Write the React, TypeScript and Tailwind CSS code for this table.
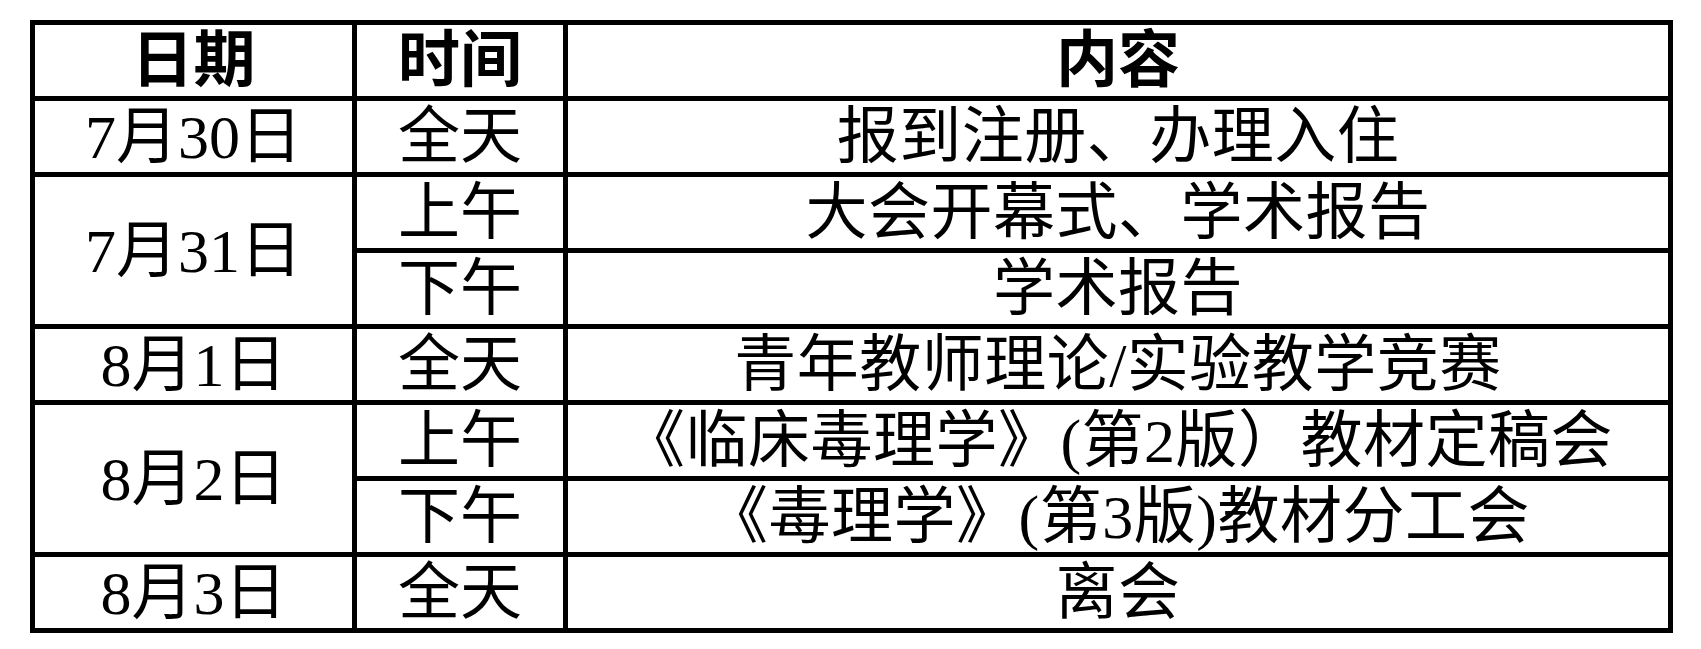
import { Fragment } from 'react';

const rows: { date?: string; span?: number; time: string; content: string }[] = [
  { date: '7月30日', time: '全天', content: '报到注册、办理入住' },
  { date: '7月31日', span: 2, time: '上午', content: '大会开幕式、学术报告' },
  { time: '下午', content: '学术报告' },
  { date: '8月1日', time: '全天', content: '青年教师理论/实验教学竞赛' },
  { date: '8月2日', span: 2, time: '上午', content: '《临床毒理学》(第2版）教材定稿会' },
  { time: '下午', content: '《毒理学》(第3版)教材分工会' },
  { date: '8月3日', time: '全天', content: '离会' },
];

const cell = 'bg-white flex items-center justify-center leading-none whitespace-nowrap';

export default function App() {
  return (
    <div
      className="w-[1701px] h-[649px] bg-white pt-[20px] pl-[30px] text-black text-[62px]"
      style={{ fontFamily: '"Liberation Serif", "Noto Sans CJK SC", serif' }}
    >
      <div className="grid w-fit grid-cols-[317px_206px_1100px] grid-rows-[repeat(8,71px)] gap-[5px] bg-black p-[5px]">
        <div className={`${cell} font-bold`}>日期</div>
        <div className={`${cell} font-bold`}>时间</div>
        <div className={`${cell} font-bold`}>内容</div>
        {rows.map((r, i) => (
          <Fragment key={i}>
            {r.date && (
              <div className={`${cell} ${r.span === 2 ? 'row-span-2' : ''}`}>
                {r.date}
              </div>
            )}
            <div className={cell}>{r.time}</div>
            <div className={`${cell} tracking-[0.5px]`}>{r.content}</div>
          </Fragment>
        ))}
      </div>
    </div>
  );
}
